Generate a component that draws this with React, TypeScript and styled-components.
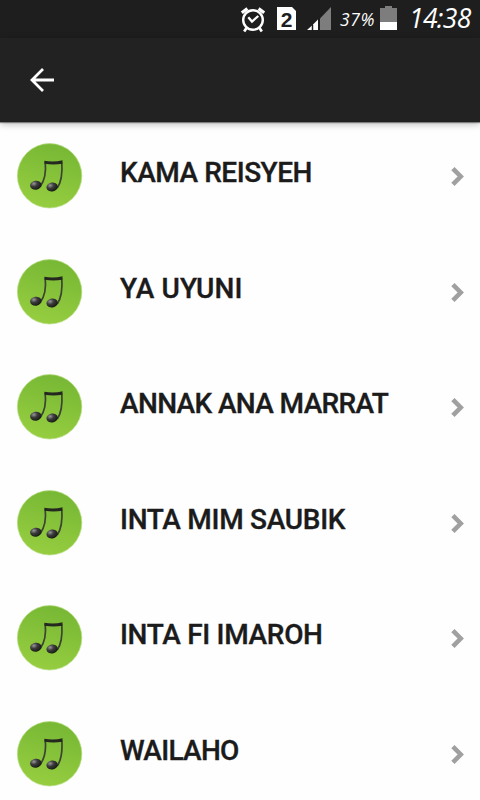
import React from "react";
import styled, { createGlobalStyle } from "styled-components";

const GlobalStyle = createGlobalStyle`
  * { box-sizing: border-box; }
  body { margin: 0; background: #fefefe; }
`;

const Screen = styled.div`
  width: 480px;
  height: 800px;
  overflow: hidden;
  display: flex;
  flex-direction: column;
  background: #fefefe;
  font-family: Roboto, sans-serif;
`;

const StatusBar = styled.header`
  flex: none;
  height: 38px;
  padding-left: 240px;
  display: flex;
  align-items: flex-start;
  background: #1e1e1e;
  color: #fff;
`;

const StatusIcon = styled.svg<{ $gap?: number }>`
  flex: none;
  display: block;
  margin-left: ${(p) => p.$gap ?? 0}px;
`;

const SimBadge = styled.span`
  flex: none;
  width: 19px;
  height: 23px;
  margin: 7px 0 0 11px;
  background: #fff;
  color: #1e1e1e;
  clip-path: polygon(0 0, 15px 0, 100% 4px, 100% 100%, 0 100%);
  font: bold 21px/25px "Liberation Sans", sans-serif;
  text-align: center;
`;

const BatteryLevel = styled.span`
  flex: none;
  width: 35px;
  margin: 9px 0 0 9px;
  font: italic 400 17.5px/20px "Open Sans", sans-serif;
  letter-spacing: 0.6px;
  white-space: nowrap;
`;

const Clock = styled.time`
  flex: none;
  margin: 3px 0 0 12px;
  font: italic 400 26.5px/30px "Open Sans", sans-serif;
  letter-spacing: -0.7px;
  white-space: nowrap;
`;

const Toolbar = styled.nav`
  position: relative;
  z-index: 1;
  flex: none;
  height: 84px;
  padding-left: 28px;
  display: flex;
  align-items: center;
  background: #222;
  box-shadow: 0 1px 1px rgba(0, 0, 0, 0.4), 0 2px 7px rgba(0, 0, 0, 0.28);
`;

const BackButton = styled.button`
  display: block;
  padding: 0;
  border: 0;
  background: none;
  line-height: 0;
`;

const SongList = styled.ul`
  flex: 1;
  min-height: 0;
  margin: 0;
  padding: 21px 0 0;
  list-style: none;
`;

const SongRow = styled.li`
  height: 115.5px;
  padding: 0 14px 0 16px;
  display: flex;
  align-items: flex-start;
`;

const Artwork = styled.svg`
  flex: none;
  display: block;
`;

const Title = styled.span<{ $tracking: number }>`
  flex: 1;
  margin: 13px 0 0 37px;
  color: #1b1b1b;
  font-size: 28px;
  font-weight: 500;
  line-height: 33px;
  letter-spacing: ${(p) => p.$tracking}px;
  -webkit-text-stroke: 0.35px #1b1b1b;
  white-space: nowrap;
`;

const Chevron = styled.svg`
  flex: none;
  display: block;
  margin-top: 22px;
`;

const songs = [
  { title: "KAMA REISYEH", tracking: -0.47 },
  { title: "YA UYUNI", tracking: 0.18 },
  { title: "ANNAK ANA MARRAT", tracking: -0.64 },
  { title: "INTA MIM SAUBIK", tracking: -0.28 },
  { title: "INTA FI IMAROH", tracking: -0.31 },
  { title: "WAILAHO", tracking: -0.72 },
];

function AlarmIcon() {
  return (
    <StatusIcon width="26" height="38" viewBox="0 0 26 38" fill="none" stroke="#fff">
      <circle cx="13" cy="20" r="9.8" strokeWidth="2.4" />
      <path d="M8.3 17.2 12 21.5 18.3 16" strokeWidth="2.3" />
      <path d="M1.8 12.8 7.4 8.6M24.2 12.8 18.6 8.6" strokeWidth="3.2" />
      <path d="M6.5 28 4.2 31.5M19.5 28 21.8 31.5" strokeWidth="2.7" />
    </StatusIcon>
  );
}

function SignalIcon() {
  return (
    <StatusIcon $gap={11} width="24" height="38" viewBox="0 0 24 38">
      <path d="M13 18.5 24 7V30H13Z" fill="#7d7d7d" />
      <path d="M0 30 5 25.5V30ZM6 24.5 11 19.5V30H6Z" fill="#fff" />
      <path d="M5.5 25V30M12 18V30" stroke="#1e1e1e" strokeWidth="1.5" />
    </StatusIcon>
  );
}

function BatteryIcon() {
  return (
    <StatusIcon $gap={5} width="17" height="38" viewBox="0 0 17 38">
      <path d="M0 8H5V6H12V8H17V22H0Z" fill="#7d7d7d" />
      <path d="M0 22H17V30H0Z" fill="#fff" />
    </StatusIcon>
  );
}

function MusicArtwork() {
  return (
    <Artwork width="67" height="67" viewBox="0 0 67 67">
      <defs>
        <linearGradient id="disc" x1="0.65" y1="0" x2="0.35" y2="1">
          <stop offset="0" stopColor="#76b734" />
          <stop offset="1" stopColor="#97ce40" />
        </linearGradient>
        <radialGradient id="head" cx="0.35" cy="0.3" r="0.7">
          <stop offset="0" stopColor="#999" />
          <stop offset="0.45" stopColor="#3c3c3c" />
          <stop offset="1" stopColor="#181c15" />
        </radialGradient>
      </defs>
      <circle cx="33.6" cy="32.8" r="32.2" fill="url(#disc)" stroke="#b4dc80" strokeWidth="0.7" />
      <path
        d="M29.2 18.8C30.2 28 28.9 37 24.2 43.5M45.8 19.2C46.5 29 45.3 39 41.2 45"
        fill="none"
        stroke="#3b4333"
        strokeWidth="1.7"
      />
      <path d="M28.3 17.8Q38 19.6 46.6 17.2L46.3 20.8Q37 22.2 28.6 20.7Z" fill="#24281f" />
      <ellipse cx="19.8" cy="42.2" rx="5.7" ry="4.5" fill="url(#head)" transform="rotate(-8 19.8 42.2)" />
      <ellipse cx="36.1" cy="44" rx="5.7" ry="4.5" fill="url(#head)" transform="rotate(-8 36.1 44)" />
    </Artwork>
  );
}

export default function App() {
  return (
    <>
      <GlobalStyle />
      <Screen>
        <StatusBar>
          <AlarmIcon />
          <SimBadge>2</SimBadge>
          <SignalIcon />
          <BatteryLevel>37%</BatteryLevel>
          <BatteryIcon />
          <Clock>14:38</Clock>
        </StatusBar>
        <Toolbar>
          <BackButton aria-label="Back">
            <svg width="28" height="28" viewBox="0 0 28 28" fill="none" stroke="#fff" strokeWidth="2.8">
              <path d="M26 14H4M15 3 4 14 15 25" />
            </svg>
          </BackButton>
        </Toolbar>
        <SongList>
          {songs.map(({ title, tracking }) => (
            <SongRow key={title}>
              <MusicArtwork />
              <Title $tracking={tracking}>{title}</Title>
              <Chevron width="18" height="24" viewBox="0 0 18 24" fill="none" stroke="#a0a0a0">
                <path d="M4.9 3.6 12.7 11.5 4.9 19.4" strokeWidth="4.6" />
              </Chevron>
            </SongRow>
          ))}
        </SongList>
      </Screen>
    </>
  );
}
